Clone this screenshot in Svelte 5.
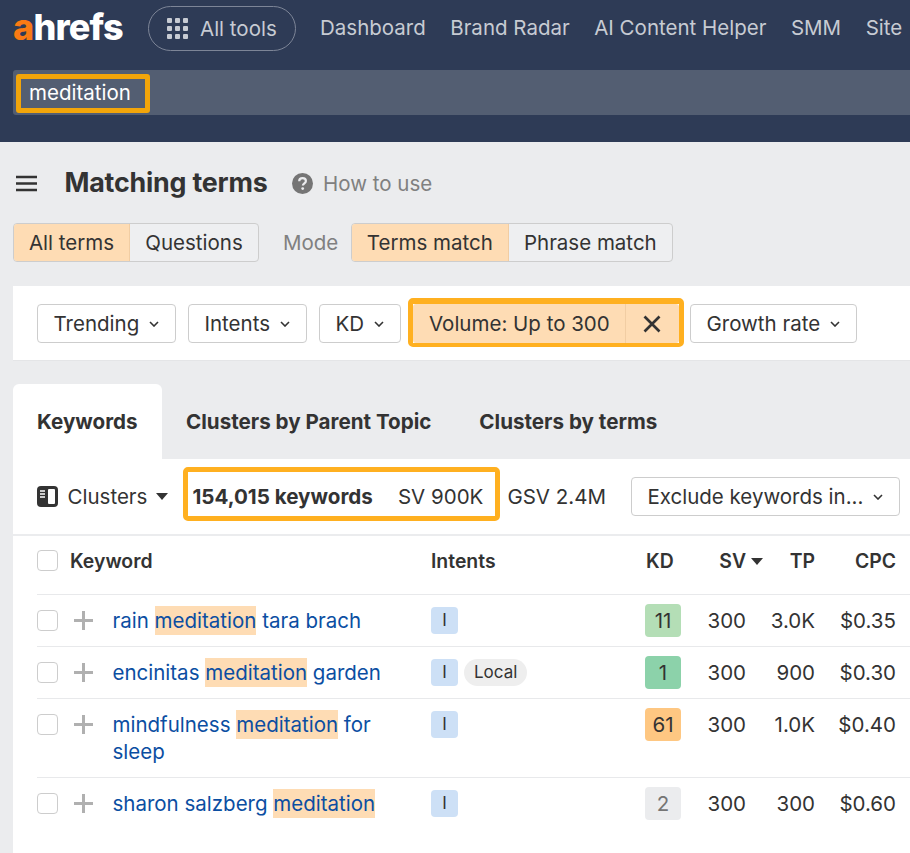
<script lang="ts">
  const nav = ['Dashboard', 'Brand Radar', 'AI Content Helper', 'SMM', 'Site']

  const filters = [
    { label: 'Trending', cls: 'f-trending' },
    { label: 'Intents', cls: 'f-intents' },
    { label: 'KD', cls: 'f-kd' },
  ]

  const rows = [
    { pre: 'rain ', post: ' tara brach', local: false, kd: 11, kdClass: 'kd-light', tp: '3.0K', cpc: '$0.35' },
    { pre: 'encinitas ', post: ' garden', local: true, kd: 1, kdClass: 'kd-green', tp: '900', cpc: '$0.30' },
    { pre: 'mindfulness ', post: ' for sleep', local: false, kd: 61, kdClass: 'kd-orange', tp: '1.0K', cpc: '$0.40' },
    { pre: 'sharon salzberg ', post: '', local: false, kd: 2, kdClass: 'kd-grey', tp: '300', cpc: '$0.60' },
  ]
</script>

<div class="page">
  <header class="top">
    <div class="top-row">
      <div class="logo"><span class="logo-a">a</span>hrefs</div>
      <button class="all-tools">
        <svg viewBox="0 0 21 21" class="dots" fill="currentColor">
          {#each [0, 8, 16] as y}
            {#each [0, 8, 16] as x}
              <rect x={x} y={y} width="5" height="5" rx="1" />
            {/each}
          {/each}
        </svg>
        All tools
      </button>
      <nav class="nav">
        {#each nav as item}
          <span>{item}</span>
        {/each}
      </nav>
    </div>
    <div class="search">
      <div class="search-term">meditation</div>
    </div>
  </header>

  <div class="title-row">
    <svg class="burger" viewBox="0 0 21 17" fill="none" stroke="#333" stroke-width="2.6">
      <path d="M0 2h21M0 8.5h21M0 15h21" />
    </svg>
    <h1>Matching terms</h1>
    <svg class="help" viewBox="0 0 21 21">
      <circle cx="10.5" cy="10.5" r="10.5" fill="#757575" />
      <path d="M7.2 8.2c0-2 1.5-3.1 3.4-3.1s3.3 1.1 3.3 2.9c0 2.4-3 2.4-3 4.6" fill="none" stroke="#ebecee" stroke-width="2.2" />
      <circle cx="10.7" cy="15.6" r="1.4" fill="#ebecee" />
    </svg>
    <span class="how">How to use</span>
  </div>

  <div class="mode-row">
    <div class="segment">
      <span class="seg on seg-all">All terms</span>
      <span class="seg seg-q">Questions</span>
    </div>
    <span class="mode-label">Mode</span>
    <div class="segment">
      <span class="seg on seg-terms">Terms match</span>
      <span class="seg seg-phrase">Phrase match</span>
    </div>
  </div>

  <div class="filters">
    {#each filters as f}
      <button class="filter {f.cls}">
        {f.label}
        <svg class="chev" viewBox="0 0 10 6" fill="none" stroke="currentColor" stroke-width="1.6"><path d="M1 1l4 4 4-4" /></svg>
      </button>
    {/each}
    <div class="hl hl-volume">
      <div class="volume">
        <span class="volume-label">Volume: Up to 300</span>
        <span class="volume-x">
          <svg viewBox="0 0 18 18" fill="none" stroke="#333" stroke-width="2.7"><path d="M1.5 1.5l15 15M16.5 1.5l-15 15" /></svg>
        </span>
      </div>
    </div>
    <button class="filter f-growth">
      Growth rate
      <svg class="chev" viewBox="0 0 10 6" fill="none" stroke="currentColor" stroke-width="1.6"><path d="M1 1l4 4 4-4" /></svg>
    </button>
  </div>

  <div class="tabs">
    <span class="tab active">Keywords</span>
    <span class="tab t-parent">Clusters by Parent Topic</span>
    <span class="tab t-terms">Clusters by terms</span>
  </div>

  <section class="card">
    <div class="toolbar">
      <svg class="clusters-icon" viewBox="0 0 21 21">
        <rect width="21" height="21" rx="4" fill="#333" />
        <rect x="11" y="3" width="7" height="15" rx="1" fill="#fff" />
        <path d="M3 5h5M3 8h5M3 11h5" stroke="#fff" stroke-width="1.4" />
      </svg>
      <span class="clusters">Clusters</span>
      <svg class="caret" viewBox="0 0 12 7" fill="currentColor"><path d="M0 0h12L6 7z" /></svg>
      <div class="hl hl-count">
        <strong>154,015 keywords</strong>
        <span>SV 900K</span>
      </div>
      <span class="gsv">GSV 2.4M</span>
      <button class="filter f-exclude">
        Exclude keywords in...
        <svg class="chev" viewBox="0 0 10 6" fill="none" stroke="currentColor" stroke-width="1.6"><path d="M1 1l4 4 4-4" /></svg>
      </button>
    </div>

    <div class="grid head">
      <div class="kw-head"><span class="check"></span><span>Keyword</span></div>
      <div>Intents</div>
      <div class="kd-head">KD</div>
      <div class="num sv-head">SV<svg viewBox="0 0 12 7" fill="currentColor"><path d="M0 0h12L6 7z" /></svg></div>
      <div class="num">TP</div>
      <div class="num">CPC</div>
    </div>

    {#each rows as row}
      <div class="grid row">
        <div class="kw">
          <span class="check"></span>
          <svg class="plus" viewBox="0 0 19 19" fill="none" stroke="#b0b0b0" stroke-width="3"><path d="M9.5 0v19M0 9.5h19" /></svg>
          <a href="#top">{row.pre}<mark>meditation</mark>{row.post}</a>
        </div>
        <div class="intents">
          <span class="intent">I</span>
          {#if row.local}<span class="local">Local</span>{/if}
        </div>
        <div><span class="kd {row.kdClass}">{row.kd}</span></div>
        <div class="num">300</div>
        <div class="num">{row.tp}</div>
        <div class="num">{row.cpc}</div>
      </div>
    {/each}
  </section>
</div>

<style>
  :global(body) {
    margin: 0;
    background: #ebecee;
    overflow: hidden;
  }

  .page {
    height: 853px;
    display: flex;
    flex-direction: column;
    font-family: Inter, "Liberation Sans", sans-serif;
    font-size: 20.5px;
    line-height: 27px;
    color: #333;
    overflow: hidden;
  }

  button {
    font: inherit;
    color: inherit;
    cursor: pointer;
  }

  .top {
    height: 142px;
    flex-shrink: 0;
    box-sizing: border-box;
    background: #2e3b56;
    padding: 6px 0 0 13px;
  }

  .top-row {
    display: flex;
    align-items: center;
    height: 45px;
    white-space: nowrap;
  }

  .logo {
    width: 135px;
    font-size: 36px;
    font-weight: 800;
    letter-spacing: -0.8px;
    color: #fff;
    line-height: 40px;
    margin-top: -4px;
  }

  .logo-a {
    color: #f97a14;
  }

  .all-tools {
    display: flex;
    align-items: center;
    gap: 12px;
    width: 148px;
    height: 45px;
    box-sizing: border-box;
    padding: 0 0 0 18px;
    background: transparent;
    border: 1px solid #7d8597;
    border-radius: 23px;
    color: #c7cbd3;
  }

  .dots {
    width: 21px;
    height: 21px;
  }

  .nav {
    display: flex;
    gap: 24.5px;
    margin: -2px 0 0 24px;
    color: #c7cbd3;
  }

  .search {
    margin-top: 19px;
    height: 45px;
    box-sizing: border-box;
    background: #535e72;
    border-radius: 3px 0 0 3px;
    padding: 4px 0 0 3px;
  }

  .search-term {
    width: 134px;
    height: 39px;
    box-sizing: border-box;
    border: 5px solid #f2a50a;
    border-radius: 3px;
    padding: 0 0 0 8px;
    color: #fff;
  }

  .title-row {
    display: flex;
    align-items: center;
    height: 36px;
    margin-top: 23px;
    padding-left: 16px;
    flex-shrink: 0;
  }

  .burger {
    width: 21px;
    height: 17px;
  }

  h1 {
    margin: -2px 0 0 27.5px;
    font-size: 26.8px;
    font-weight: 700;
    letter-spacing: -0.2px;
  }

  .help {
    width: 21px;
    height: 21px;
    margin-left: 24.5px;
  }

  .how {
    margin-left: 10px;
    color: #808080;
  }

  .mode-row {
    display: flex;
    align-items: center;
    margin-top: 22px;
    padding-left: 13px;
    flex-shrink: 0;
  }

  .segment {
    display: flex;
    height: 39px;
    box-sizing: border-box;
    border: 1px solid #cdcdcd;
    border-radius: 4px;
    background: #eeeff1;
    overflow: hidden;
  }

  .seg {
    display: flex;
    align-items: center;
    justify-content: center;
    box-sizing: border-box;
  }

  .seg.on {
    background: #fedcb4;
    border-right: 1px solid #f1cda3;
  }

  .seg-all { width: 116px; }
  .seg-q { width: 128px; }
  .seg-terms { width: 157px; }
  .seg-phrase { width: 163px; }

  .mode-label {
    margin: 0 12.5px 0 24px;
    color: #808080;
  }

  .filters {
    display: flex;
    align-items: center;
    gap: 12px;
    height: 75px;
    box-sizing: border-box;
    margin: 24px 0 0 13px;
    padding: 1px 0 0 24px;
    background: #fff;
    border-bottom: 1px solid #e4e5e7;
    flex-shrink: 0;
  }

  .filter {
    display: flex;
    align-items: center;
    justify-content: space-between;
    height: 39px;
    box-sizing: border-box;
    padding: 0 16px 0 15.5px;
    background: #fff;
    border: 1px solid #cdcdcd;
    border-radius: 4px;
    white-space: nowrap;
    flex-shrink: 0;
  }

  .f-trending { width: 139px; }
  .f-intents { width: 119px; }
  .f-kd { width: 82px; }
  .f-growth { width: 167px; margin-left: -6px; }
  .f-exclude { width: 269px; margin-left: 25px; }

  .chev {
    width: 10px;
    height: 6px;
    flex-shrink: 0;
  }

  .hl {
    box-sizing: border-box;
    border: 5px solid #ffb020;
    border-radius: 5px;
  }

  .hl-volume {
    margin: 0 0 2px -5px;
    border-top-width: 6px;
    border-bottom-width: 4px;
  }

  .volume {
    display: flex;
    align-items: center;
    width: 266px;
    height: 39px;
    background: #fedcb4;
    border-radius: 3px;
  }

  .volume-label {
    flex: 1;
    padding-left: 16px;
    white-space: nowrap;
  }

  .volume-x {
    display: flex;
    align-items: center;
    justify-content: center;
    width: 54px;
    height: 100%;
    padding-right: 2px;
    box-sizing: border-box;
    border-left: 1px solid #f1cda3;
  }

  .volume-x svg {
    width: 18px;
    height: 18px;
  }

  .tabs {
    display: flex;
    height: 75px;
    margin: 23px 0 0 13px;
    font-size: 20.6px;
    flex-shrink: 0;
  }

  .tab {
    display: flex;
    align-items: center;
    font-weight: 700;
    white-space: nowrap;
  }

  .tab.active {
    width: 149px;
    box-sizing: border-box;
    padding-left: 24px;
    background: #fff;
    border-radius: 6px 6px 0 0;
  }

  .t-parent { margin-left: 24px; }
  .t-terms { margin-left: 48px; }

  .card {
    flex: 1;
    margin-left: 13px;
    background: #fff;
  }

  .toolbar {
    display: flex;
    align-items: center;
    height: 77px;
    padding: 0 0 0 24px;
    border-bottom: 2px solid #ebecee;
    box-sizing: border-box;
    white-space: nowrap;
  }

  .clusters-icon {
    width: 21px;
    height: 21px;
    flex-shrink: 0;
  }

  .clusters {
    margin-left: 9.5px;
  }

  .caret {
    width: 12px;
    height: 7px;
    margin-left: 9px;
    flex-shrink: 0;
  }

  .hl-count {
    display: flex;
    align-items: center;
    justify-content: space-between;
    width: 317px;
    height: 54px;
    margin: 0 7px 6px 15px;
    padding: 6px 12px 0 4px;
    flex-shrink: 0;
  }

  .hl-count strong {
    font-size: 20.6px;
    font-weight: 700;
  }

  .grid {
    display: grid;
    grid-template-columns: 394px 214px 36px 65px 69px 81px;
    align-items: start;
    margin-left: 24px;
  }

  .num {
    text-align: right;
  }

  .head {
    height: 59px;
    align-items: center;
    font-size: 19.4px;
    font-weight: 600;
    box-sizing: border-box;
    border-bottom: 1px solid #e8e9eb;
    padding-bottom: 8px;
  }

  .kw-head {
    display: flex;
    align-items: center;
    gap: 12px;
  }

  .kw-head .check {
    margin-top: -1px;
  }

  .kd-head {
    padding-left: 1px;
  }

  .sv-head {
    display: flex;
    align-items: center;
    justify-content: flex-end;
    gap: 5px;
    margin-right: -17px;
  }

  .sv-head svg {
    width: 12px;
    height: 7px;
  }

  .check {
    display: block;
    width: 21px;
    height: 21px;
    box-sizing: border-box;
    background: #fff;
    border: 1px solid #cdcdcd;
    border-radius: 4px;
    flex-shrink: 0;
  }

  .row {
    padding: 9px 0;
    border-bottom: 1px solid #e8e9eb;
  }

  .row:last-child {
    border-bottom: none;
  }

  .row > div:not(.kw):not(.intents) {
    line-height: 33px;
  }

  .kw {
    display: flex;
    align-items: flex-start;
    padding: 3px 0;
  }

  .kw .check {
    margin-top: 3px;
  }

  .kw a {
    width: 280px;
    margin-left: 19.5px;
    color: #0b4ea2;
    text-decoration: none;
  }

  .plus {
    width: 19px;
    height: 19px;
    margin: 4px 0 0 16px;
    flex-shrink: 0;
  }

  mark {
    background: #fedcb4;
    color: inherit;
    padding: 2px 0;
  }

  .intents {
    display: flex;
    align-items: center;
    gap: 6px;
    padding-top: 3px;
  }

  .intent {
    display: flex;
    align-items: center;
    justify-content: center;
    width: 27px;
    height: 27px;
    background: #cde0f6;
    border-radius: 4px;
    font-size: 17px;
  }

  .local {
    display: flex;
    align-items: center;
    height: 27px;
    padding: 0 10px;
    background: #eeeeee;
    border-radius: 14px;
    font-size: 17px;
  }

  .kd {
    display: block;
    width: 36px;
    height: 33px;
    text-align: center;
    border-radius: 4px;
  }

  .kd-light { background: #b4deb6; }
  .kd-green { background: #8cd2aa; }
  .kd-orange { background: #fec782; }
  .kd-grey { background: #ebecee; color: #757575; }
</style>
